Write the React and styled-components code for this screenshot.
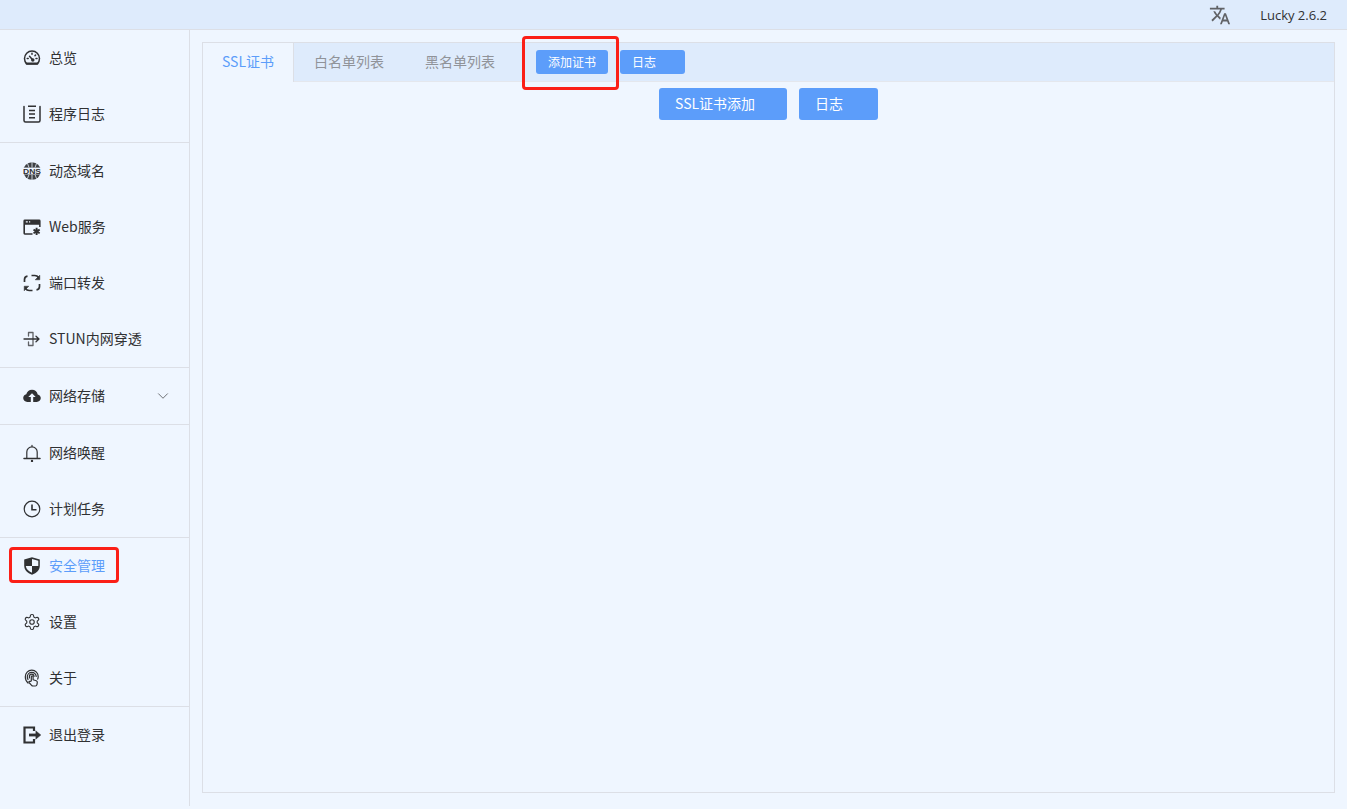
import React from 'react';
import styled, { createGlobalStyle } from 'styled-components';
import { MdTranslate } from 'react-icons/md';
import { LuChevronDown, LuSettings } from 'react-icons/lu';

const GlobalStyle = createGlobalStyle`
  html, body {
    margin: 0;
    height: 100%;
    overflow: hidden;
    background: #eff6ff;
    font-family: "Noto Sans CJK SC", "Open Sans", sans-serif;
    font-size: 14px;
    color: #303133;
  }
  *, *::after { box-sizing: border-box; }
`;

const Page = styled.div`
  display: flex;
  flex-direction: column;
  height: 806px;
`;

const TopBar = styled.header`
  flex: 0 0 30px;
  display: flex;
  align-items: center;
  justify-content: flex-end;
  padding-right: 20px;
  background: #deebfc;
  border-bottom: 1px solid #dcdfe6;
`;

const LangIcon = styled(MdTranslate)`
  font-size: 22px;
  color: #606266;
  margin-right: 29px;
`;

const Version = styled.span`
  font-family: "Open Sans", sans-serif;
  font-size: 13px;
  color: #303133;
`;

const Body = styled.div`
  flex: 1;
  display: flex;
  min-height: 0;
`;

const Sidebar = styled.nav`
  flex: 0 0 190px;
  border-right: 1px solid #dcdfe6;
`;

const MenuGroup = styled.div`
  border-bottom: ${(props) => (props.last ? 'none' : '1px solid #dcdfe6')};
`;

const MenuItem = styled.div`
  position: relative;
  display: flex;
  align-items: center;
  height: 56px;
  padding-left: 23px;
  gap: 8px;
  color: ${(props) => (props.active ? '#5c9dfa' : '#303133')};

  ${(props) =>
    props.active &&
    `&::after {
      content: '';
      position: absolute;
      left: 9px;
      top: 9px;
      width: 110px;
      height: 36px;
      border: 3px solid #fb1f17;
      border-radius: 4px;
    }`}
`;

const MenuLabel = styled.span`
  padding-bottom: 2px;
  white-space: nowrap;
`;

const IconSlot = styled.span`
  display: flex;
  align-items: center;
  justify-content: center;
  width: 18px;
  height: 18px;
  color: #303133;
  font-size: 18px;
`;

const Chevron = styled(LuChevronDown)`
  position: absolute;
  right: 17px;
  top: 19px;
  font-size: 18px;
  stroke-width: 1.2;
  color: #606266;
`;

const Main = styled.main`
  flex: 1;
  padding: 12px 12px 13px;
  min-width: 0;
`;

const Panel = styled.section`
  height: 100%;
  border: 1px solid #dcdfe6;
`;

const TabBar = styled.div`
  display: flex;
  align-items: center;
  height: 39px;
  background: #deebfc;
  border-bottom: 1px solid #e4e7ed;
`;

const Tab = styled.div`
  display: flex;
  align-items: center;
  justify-content: center;
  height: 39px;
  flex: 0 0 ${(props) => (props.active ? '91px' : '111px')};
  padding-bottom: 2px;
  padding-right: ${(props) => (props.active ? '0' : '1px')};
  white-space: nowrap;
  color: ${(props) => (props.active ? '#5c9dfa' : '#909399')};
  background: ${(props) => (props.active ? '#eff6ff' : 'transparent')};
  border-right: ${(props) => (props.active ? '1px solid #dcdfe6' : 'none')};
`;

const Button = styled.div`
  position: relative;
  display: flex;
  align-items: center;
  height: ${(props) => (props.small ? '24px' : '32px')};
  width: ${(props) => props.width}px;
  padding-left: ${(props) => (props.small ? '12px' : '16px')};
  padding-bottom: 2px;
  margin-left: ${(props) => props.offset || 12}px;
  font-size: ${(props) => (props.small ? '12px' : '14px')};
  white-space: nowrap;
  color: #fff;
  background: #5c9dfa;
  border-radius: 3px;

  ${(props) =>
    props.marked &&
    `&::after {
      content: '';
      position: absolute;
      left: -14px;
      top: -14px;
      width: 97px;
      height: 54px;
      border: 3px solid #fb1f17;
      border-radius: 4px;
    }`}
`;

const PanelActions = styled.div`
  display: flex;
  justify-content: center;
  margin-top: 6px;
  margin-left: -12px;
`;

const Svg = ({ children, fill = 'none', stroke = 'currentColor', sw = 1.6, size = 18 }) => (
  <svg width={size} height={size} viewBox="0 0 18 18" fill={fill} stroke={stroke} strokeWidth={sw} strokeLinecap="round" strokeLinejoin="round">
    {children}
  </svg>
);

const GaugeIcon = () => (
  <Svg sw={1.5}>
    <path d="M3.800 15h10.400a7.500 7.500 0 0 0 2.300-5.500A7.500 7.500 0 0 0 9 2 7.500 7.500 0 0 0 1.500 9.500 7.500 7.500 0 0 0 3.800 15z" />
    <path d="M3.500 14.500h11" strokeWidth="2" />
    <path d="M9.800 11 6.500 7.200M9 4.300v1M4.200 9.500h1M13 9.500h1M12.600 6l-.6.600" />
    <circle cx="9.800" cy="11" r="1" fill="currentColor" />
  </Svg>
);

const LogIcon = () => (
  <Svg sw={1.5}>
    <path d="M1 1.500v14A1.500 1.500 0 0 0 2.500 17h13a1.500 1.500 0 0 0 1.500-1.500v-14" />
    <path d="M5 1.200h8M6 5.500h6M6 9h6M6 12.800h6" strokeLinecap="butt" />
  </Svg>
);

const DnsIcon = () => (
  <svg width="18" height="18" viewBox="0 0 18 18">
    <circle cx="9" cy="9" r="8.800" fill="#3f4144" />
    <path d="M9 0v5.500M4.500 1.500 6 5.500M13.500 1.500 12 5.500M9 12.500V18M6 12.500 4.500 16.500M12 12.500l1.500 4" stroke="#eff6ff" strokeWidth="0.8" />
    <rect x="0" y="5.600" width="18" height="6.800" fill="#eff6ff" />
    <text x="9" y="12" textAnchor="middle" textLength="18" lengthAdjust="spacingAndGlyphs" fontSize="8" fontWeight="700" fontFamily="Liberation Sans, sans-serif" fill="#303133">DNS</text>
  </svg>
);

const WebIcon = () => (
  <svg width="18" height="18" viewBox="0 0 18 18">
    <path d="M1.800 1.500h14.400a1.400 1.400 0 0 1 1.400 1.400V9h-1.500V6.800H2v8.400h7.500v1.500H1.800a1.400 1.400 0 0 1-1.400-1.400V2.900a1.400 1.400 0 0 1 1.400-1.400z" fill="#303133" />
    <path d="M2.800 3.900h2M6 3.900h1.200" stroke="#eff6ff" strokeWidth="1.200" />
    <path d="M13.600 9.800v7.200M10.500 11.600l6.200 3.600M16.700 11.600l-6.200 3.600" stroke="#303133" strokeWidth="1.900" />
  </svg>
);

const PortIcon = () => (
  <svg width="18" height="18" viewBox="0 0 18 18" fill="none" stroke="#303133" strokeWidth="1.700">
    <path d="M1.500 8V5.500a3.500 3.500 0 0 1 3-3.400" />
    <path d="M8.500 1.500h3.300a4.500 4.500 0 0 1 3.700 2" />
    <path d="M16.500 10v2.500a3.500 3.500 0 0 1-3 3.400" />
    <path d="M9.500 16.500H6.200a4.500 4.500 0 0 1-3.700-2" />
    <path d="M16.800 1.200v4.600h-4.600zM1.200 16.800v-4.600h4.600z" fill="#303133" strokeWidth="0.500" />
    <path d="M11 .3 14 1.700 11 3.300zM7 17.700 4 16.300 7 14.700z" fill="none" strokeWidth="0" />
  </svg>
);

const StunIcon = () => (
  <Svg sw={1.1}>
    <path d="M5.500 6V2.500h4.500v13H5.500V12" stroke="#606266" strokeWidth="1.300" />
    <path d="M1 9h14.500M13 6.200 16 9l-3 2.800" strokeWidth="1.300" />
  </Svg>
);

const CloudIcon = () => (
  <svg width="18" height="18" viewBox="0 0 18 18">
    <path d="M4.300 15C2 15 .2 13.300.2 11.100c0-1.900 1.300-3.400 3.100-3.800C3.900 4.700 6.200 2.800 9 2.800c2.900 0 5.200 2 5.700 4.600 1.800.4 3.100 1.900 3.100 3.700 0 2.200-1.800 3.900-4.100 3.900z" fill="#303133" />
    <path d="M9 6.300 5.300 10h2.500v5h2.400v-5h2.500z" fill="#eff6ff" />
  </svg>
);

const BellIcon = () => (
  <Svg sw={1.200}>
    <path d="M9 1.300v1.200M3.800 14V8a5.200 5.200 0 0 1 10.400 0v6" />
    <path d="M1 14.500h16" strokeWidth="1.500" />
    <circle cx="9" cy="17" r="0.600" fill="currentColor" />
  </Svg>
);

const ClockIcon = () => (
  <Svg sw={1.200}>
    <circle cx="9" cy="9" r="7.800" />
    <path d="M9 4.500V9.800h4.500" strokeWidth="1.600" strokeLinecap="butt" strokeLinejoin="miter" />
  </Svg>
);

const ShieldIcon = () => (
  <svg width="18" height="18" viewBox="0 0 18 18">
    <path d="M9 .3 16.800 2.600v6.200c0 4.200-3.200 7.500-7.800 9-4.600-1.500-7.800-4.800-7.800-9V2.600z" fill="#303133" />
    <path d="M9 2 15.300 3.800V9H9zM9 9H2.800c.4 3 2.800 5.400 6.200 6.800z" fill="#eff6ff" />
  </svg>
);

const HandIcon = () => (
  <Svg sw={1.200}>
    <path d="M5 14C3 12.300 2.300 10 2.300 7.800 2.300 4 5 1.200 8.800 1.200s6.400 2.800 6.400 6.400c0 1-.2 1.800-.5 2.500" />
    <path d="M5 10.500C4.500 9.500 4.300 8.500 4.300 7.800c0-2.500 2-4.500 4.500-4.500S13.200 5.300 13.200 7.500" />
    <path d="M6.400 9V7.500a2.300 2.300 0 0 1 4.600 0" />
    <path d="M8.300 12V7.800a.9.900 0 0 1 1.800 0v3l3.200 1c.8.300 1.100 1 1 1.700l-.4 2.300c-.1.800-.7 1.200-1.500 1.200h-2.400c-.6 0-1-.2-1.400-.7L6 13.500c-.5-.7.500-1.500 1.200-1z" fill="#eff6ff" />
  </Svg>
);

const LogoutIcon = () => (
  <Svg sw={2.200}>
    <path d="M11 5V1.500H1.500v15H11V13" strokeLinejoin="miter" strokeLinecap="butt" />
    <path d="M6 9h7.500" strokeWidth="2.800" strokeLinecap="butt" />
    <path d="M13 5 17.800 9 13 13z" fill="currentColor" strokeWidth="0.500" />
  </Svg>
);

const menuGroups = [
  [
    { label: '总览', icon: <GaugeIcon /> },
    { label: '程序日志', icon: <LogIcon /> },
  ],
  [
    { label: '动态域名', icon: <DnsIcon /> },
    { label: 'Web服务', icon: <WebIcon /> },
    { label: '端口转发', icon: <PortIcon /> },
    { label: 'STUN内网穿透', icon: <StunIcon /> },
  ],
  [{ label: '网络存储', icon: <CloudIcon />, expandable: true }],
  [
    { label: '网络唤醒', icon: <BellIcon /> },
    { label: '计划任务', icon: <ClockIcon /> },
  ],
  [
    { label: '安全管理', icon: <ShieldIcon />, active: true },
    { label: '设置', icon: <LuSettings strokeWidth={1.5} /> },
    { label: '关于', icon: <HandIcon /> },
  ],
  [{ label: '退出登录', icon: <LogoutIcon /> }],
];

const App = () => (
  <Page>
    <GlobalStyle />
    <TopBar>
      <LangIcon />
      <Version>Lucky 2.6.2</Version>
    </TopBar>
    <Body>
      <Sidebar>
        {menuGroups.map((group, index) => (
          <MenuGroup key={index} last={index === menuGroups.length - 1}>
            {group.map((item) => (
              <MenuItem key={item.label} active={item.active}>
                <IconSlot>{item.icon}</IconSlot>
                <MenuLabel>{item.label}</MenuLabel>
                {item.expandable ? <Chevron /> : null}
              </MenuItem>
            ))}
          </MenuGroup>
        ))}
      </Sidebar>
      <Main>
        <Panel>
          <TabBar>
            <Tab active>SSL证书</Tab>
            <Tab>白名单列表</Tab>
            <Tab>黑名单列表</Tab>
            <Button small marked width={72} offset={20}>添加证书</Button>
            <Button small width={65}>日志</Button>
          </TabBar>
          <PanelActions>
            <Button width={128} offset={12}>SSL证书添加</Button>
            <Button width={79}>日志</Button>
          </PanelActions>
        </Panel>
      </Main>
    </Body>
  </Page>
);

export default App;
